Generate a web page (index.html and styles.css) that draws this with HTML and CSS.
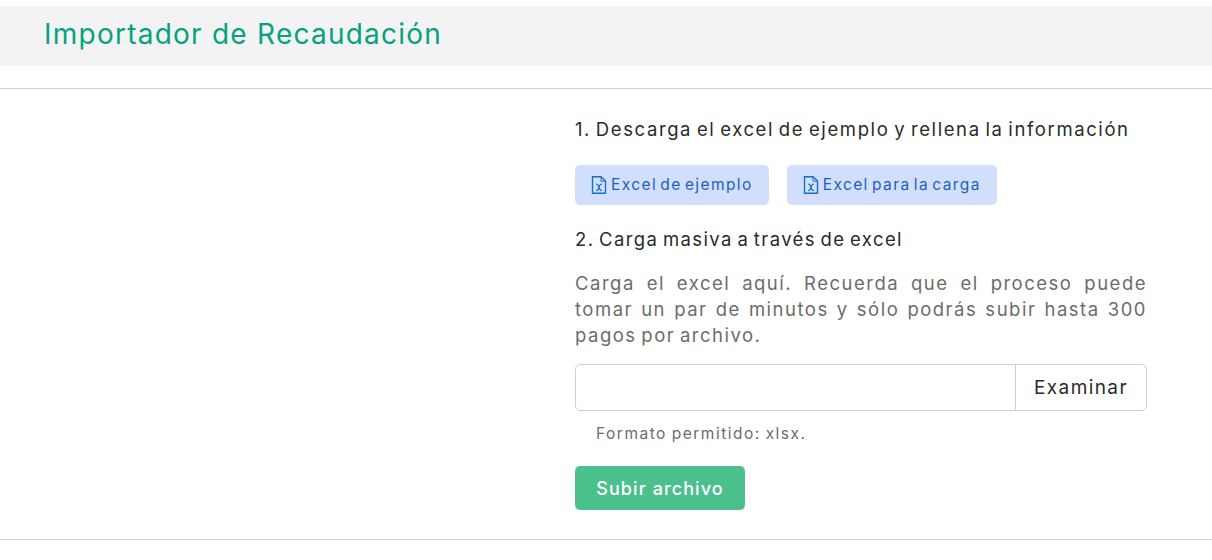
FILE: index.html
```html
<!DOCTYPE html>
<html lang="es">
<head>
<meta charset="utf-8">
<title>Importador de Recaudación</title>
<link rel="stylesheet" href="styles.css">
</head>
<body>
<header class="page-header"><h1 class="page-title">Importador de Recaudación</h1></header>
<main class="panel">
  <div class="panel-side"></div>
  <section class="panel-content">
    <h2 class="step step-first">1. Descarga el excel de ejemplo y rellena la información</h2>
    <div class="downloads">
      <a class="download" href="#"><svg class="file-icon" viewBox="0 0 16 18" aria-hidden="true"><path d="M1.5.7h8.6l4.4 4.4v12.2h-13z" fill="none" stroke="currentColor" stroke-width="1.4"/><path d="M10 .8v4.4h4.4" fill="none" stroke="currentColor" stroke-width="1"/><path d="M5 8.2h1.6l1.4 2.3 1.4-2.3H11M5 14.6h1.6l1.4-2.3 1.4 2.3H11M6.3 8.3l3.5 6.2M9.7 8.3l-3.5 6.2" fill="none" stroke="currentColor" stroke-width="1"/></svg>Excel de ejemplo</a>
      <a class="download" href="#"><svg class="file-icon" viewBox="0 0 16 18" aria-hidden="true"><path d="M1.5.7h8.6l4.4 4.4v12.2h-13z" fill="none" stroke="currentColor" stroke-width="1.4"/><path d="M10 .8v4.4h4.4" fill="none" stroke="currentColor" stroke-width="1"/><path d="M5 8.2h1.6l1.4 2.3 1.4-2.3H11M5 14.6h1.6l1.4-2.3 1.4 2.3H11M6.3 8.3l3.5 6.2M9.7 8.3l-3.5 6.2" fill="none" stroke="currentColor" stroke-width="1"/></svg>Excel para la carga</a>
    </div>
    <h2 class="step">2. Carga masiva a través de excel</h2>
    <p class="intro">Carga el excel aquí. Recuerda que el proceso puede tomar un par de minutos y sólo podrás subir hasta 300 pagos por archivo.</p>
    <div class="file-field"><span class="file-name"></span><span class="file-browse">Examinar</span></div>
    <p class="hint">Formato permitido: xlsx.</p>
    <button class="submit" type="button">Subir archivo</button>
  </section>
</main>
</body>
</html>
```
FILE: styles.css
```css
* { box-sizing: border-box; }
body {
  margin: 0;
  background: #fff;
  font-family: "Inter", "Liberation Sans", sans-serif;
  color: #212529;
}
.page-header {
  margin-top: 6px;
  height: 60px;
  background: #f3f3f3;
  padding: 0 0 4px 44px;
  display: flex;
  align-items: center;
}
.page-title {
  margin: 0;
  font-size: 28px;
  font-weight: 400;
  color: #06a27f;
  letter-spacing: 1.24px;
}
.panel {
  margin-top: 22px;
  height: 452px;
  border-top: 1px solid #cfcfcf;
  border-bottom: 1px solid #cfcfcf;
  box-shadow: 0 1px 1px rgba(0,0,0,.12);
  display: flex;
}
.panel-side { width: 575px; flex: none; }
.panel-content { width: 572px; flex: none; }
.step {
  margin: 0;
  font-size: 18.5px;
  line-height: 27px;
  font-weight: 400;
  color: #2a2a2a;
  letter-spacing: 1.4px;
  word-spacing: -2px;
}
.step-first { margin-top: 27px; letter-spacing: 1.6px; }
.downloads {
  display: flex;
  gap: 18px;
  margin: 22px 0 21px;
}
.download {
  height: 40px;
  padding: 0 16px 1px;
  display: flex;
  align-items: center;
  gap: 4px;
  background: #d2dffb;
  border-radius: 5px;
  color: #1a5fc4;
  font-size: 15.5px;
  letter-spacing: 1.4px;
  word-spacing: -2.5px;
  text-decoration: none;
}
.file-icon { width: 16px; height: 18px; flex: none; color: #1a6fc4; }
.intro {
  margin: 17px 0 0;
  font-size: 18.5px;
  line-height: 26px;
  text-align: justify;
  color: #6c6c6c;
  letter-spacing: 1.5px;
  word-spacing: -2px;
}
.file-field {
  margin-top: 16px;
  height: 47px;
  display: flex;
  border: 1px solid #cfcfcf;
  border-radius: 5px;
}
.file-name { flex: 1; }
.file-browse {
  width: 131px;
  border-left: 1px solid #cfcfcf;
  display: flex;
  align-items: center;
  justify-content: center;
  font-size: 19px;
  letter-spacing: 1.4px;
  color: #2a2a2a;
}
.hint {
  margin: 12px 0 0 21px;
  font-size: 15.5px;
  line-height: 22px;
  letter-spacing: 1.5px;
  word-spacing: -1px;
  color: #6c6c6c;
}
.submit {
  display: block;
  margin-top: 21px;
  width: 170px;
  height: 44px;
  border: 0;
  border-radius: 5px;
  background: #4cc08c;
  color: #fff;
  font: inherit;
  font-size: 18px;
  font-weight: 500;
  letter-spacing: 1.1px;
}
```
